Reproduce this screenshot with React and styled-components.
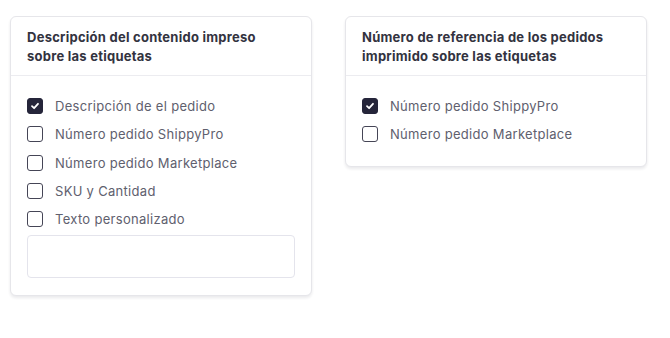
import styled, { createGlobalStyle } from "styled-components";

const GlobalStyle = createGlobalStyle`
  body {
    margin: 0;
    background: #ffffff;
    font-family: "Inter", "Noto Sans", sans-serif;
  }
`;

const Page = styled.div`
  display: grid;
  grid-template-columns: 335px 335px;
  width: 670px;
  height: 338px;
`;

const Column = styled.div`
  padding: 16px 23px 0 10px;
  box-sizing: border-box;
  display: flex;
  flex-direction: column;
  align-items: stretch;
`;

const Card = styled.section`
  background: #fff;
  border: 1px solid #e6e6ea;
  border-radius: 6px;
  box-shadow: 0 2px 3px rgba(20, 20, 40, 0.09);
`;

const CardHeader = styled.header`
  padding: 11px 16px 9px;
  border-bottom: 1px solid #ececf0;
  font-size: 13px;
  font-weight: 700;
  line-height: 19px;
  color: #33333f;
  letter-spacing: 0.25px;
`;

const CardBody = styled.div`
  padding: 16px 16px 17px;
  display: flex;
  flex-direction: column;
`;

const Row = styled.label`
  display: flex;
  align-items: center;
  gap: 12px;
  height: 28.3px;
  font-size: 13px;
  letter-spacing: 0.3px;
  color: #60606e;
`;

const Box = styled.span`
  width: 16px;
  height: 16px;
  box-sizing: border-box;
  border-radius: 3px;
  border: 1.5px solid ${(p) => (p.checked ? "#25253a" : "#454556")};
  background: ${(p) => (p.checked ? "#25253a" : "#fff")};
  display: flex;
  align-items: center;
  justify-content: center;
  flex-shrink: 0;
`;

const TextField = styled.div`
  margin-top: 2px;
  height: 41px;
  border: 1px solid #e4e4ec;
  border-radius: 4px;
`;

function Check({ checked, label }) {
  return (
    <Row>
      <Box checked={checked}>
        {checked && (
          <svg width="10" height="10" viewBox="0 0 10 10">
            <path d="M2 5.2 L4.1 7.2 L8 2.8" fill="none" stroke="#fff" strokeWidth="1.8" strokeLinecap="round" strokeLinejoin="round" />
          </svg>
        )}
      </Box>
      {label}
    </Row>
  );
}

export default function App() {
  return (
    <Page>
      <GlobalStyle />
      <Column>
        <Card>
          <CardHeader>
            Descripción del contenido impreso
            <br />
            sobre las etiquetas
          </CardHeader>
          <CardBody>
            <Check checked label="Descripción de el pedido" />
            <Check label="Número pedido ShippyPro" />
            <Check label="Número pedido Marketplace" />
            <Check label="SKU y Cantidad" />
            <Check label="Texto personalizado" />
            <TextField />
          </CardBody>
        </Card>
      </Column>
      <Column>
        <Card>
          <CardHeader>
            Número de referencia de los pedidos
            <br />
            imprimido sobre las etiquetas
          </CardHeader>
          <CardBody>
            <Check checked label="Número pedido ShippyPro" />
            <Check label="Número pedido Marketplace" />
          </CardBody>
        </Card>
      </Column>
    </Page>
  );
}
